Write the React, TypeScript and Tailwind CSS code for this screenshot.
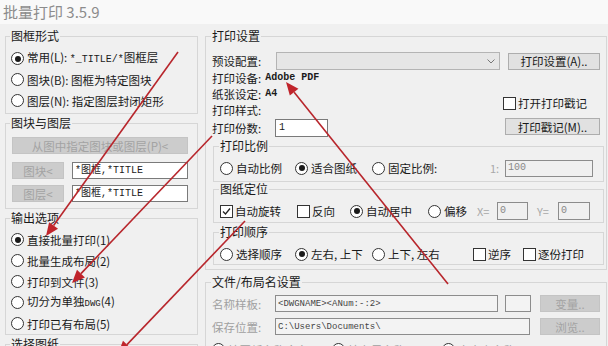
import React from 'react'

const mono = "font-['Liberation_Mono','Noto_Sans_CJK_SC',monospace]"

function Radio({ label, checked = false, className = '' }: { label: React.ReactNode; checked?: boolean; className?: string }) {
  return (
    <div className={`flex items-center gap-[3px] shrink-0 ${className}`}>
      <span className="w-[13px] h-[13px] rounded-full border border-[#333] bg-white flex items-center justify-center shrink-0">
        {checked && <span className="w-[6px] h-[6px] rounded-full bg-[#1a1a1a]" />}
      </span>
      <span className="whitespace-nowrap">{label}</span>
    </div>
  )
}

function Check({ label, checked = false, className = '' }: { label: string; checked?: boolean; className?: string }) {
  return (
    <div className={`flex items-center gap-[2px] shrink-0 ${className}`}>
      <span className="w-[13px] h-[13px] border border-[#333] bg-white flex items-center justify-center shrink-0">
        {checked && (
          <svg width="9" height="9" viewBox="0 0 9 9">
            <path d="M1 4.5 L3.5 7 L8 1.5" stroke="#222" strokeWidth="1.3" fill="none" />
          </svg>
        )}
      </span>
      <span className="whitespace-nowrap">{label}</span>
    </div>
  )
}

function Btn({ label, disabled = false, className = '' }: { label: string; disabled?: boolean; className?: string }) {
  return (
    <div
      className={`flex items-center justify-center whitespace-nowrap border ${
        disabled ? 'bg-[#cccccc] border-[#c4c4c4] text-[#a3a3a3]' : 'bg-[#e1e1e1] border-[#adadad] text-[#1a1a1a]'
      } ${className}`}
    >
      {label}
    </div>
  )
}

function Group({ title, className = '', children }: { title: string; className?: string; children?: React.ReactNode }) {
  return (
    <fieldset className={`border border-[#d6d6d6] min-w-0 ${className}`}>
      <legend className="px-[1px] -ml-[1px] text-[12px] leading-[14px] h-[14px] whitespace-nowrap">{title}</legend>
      {children}
    </fieldset>
  )
}

function Arrow({ x1, y1, x2, y2 }: { x1: number; y1: number; x2: number; y2: number }) {
  const dx = x2 - x1
  const dy = y2 - y1
  const len = Math.hypot(dx, dy)
  const ux = dx / len
  const uy = dy / len
  const hl = 13
  const hw = 5.5
  const bx = x2 - ux * hl
  const by = y2 - uy * hl
  const pts = `${x2},${y2} ${bx - uy * hw},${by + ux * hw} ${bx + uy * hw},${by - ux * hw}`
  return (
    <g>
      <line x1={x1} y1={y1} x2={bx} y2={by} stroke="#b8262c" strokeWidth="1.6" />
      <polygon points={pts} fill="#c0242b" />
    </g>
  )
}

export default function App() {
  return (
    <div className="relative w-[608px] h-[346px] overflow-hidden bg-[#f0f0f0] text-[11.5px] leading-[14px] text-[#1a1a1a] font-['Noto_Sans_CJK_SC',sans-serif]">
      <div className="h-[24px] bg-[#f9f9f9] flex items-center pl-[3px] text-[15px] text-[#8c8c8c]">批量打印 3.5.9</div>

      <div className="flex">
        {/* left column */}
        <div className="w-[200px] shrink-0 flex flex-col">
          <Group title="图框形式" className="mt-[5px] ml-[5px] w-[193px] pl-[5px] pr-[4px] pt-[5px] pb-[2px]">
            <Radio className="h-[21px]" checked label={<>常用(L): <span className={`${mono} text-[10px]`}>*_TITLE/*</span>图框层</>} />
            <Radio className="h-[21px]" label="图块(B): 图框为特定图块" />
            <Radio className="h-[21px]" label="图层(N): 指定图层封闭矩形" />
          </Group>

          <Group title="图块与图层" className="mt-[2px] ml-[5px] w-[193px] pl-[5px] pr-[4px] pt-[7px] pb-[6px]">
            <Btn disabled label="从图中指定图块或图层(P)<" className="h-[17px] ml-[1px] w-[176px]" />
            <div className="flex mt-[8px] h-[17px] ml-[1px]">
              <Btn disabled label="图块<" className="w-[52px]" />
              <div className={`ml-[8px] w-[116px] bg-white border border-[#7a7a7a] flex items-center pl-[2px] text-[10px] ${mono}`}>*图框,*TITLE</div>
            </div>
            <div className="flex mt-[6px] h-[17px] ml-[1px]">
              <Btn disabled label="图层<" className="w-[52px]" />
              <div className={`ml-[8px] w-[116px] bg-white border border-[#7a7a7a] flex items-center pl-[2px] text-[10px] ${mono}`}>*图框,*TITLE</div>
            </div>
          </Group>

          <Group title="输出选项" className="mt-[2px] ml-[5px] w-[193px] pl-[5px] pr-[4px] pt-[4px]">
            <Radio className="h-[21px]" checked label="直接批量打印(1)" />
            <Radio className="h-[21px]" label="批量生成布局(2)" />
            <Radio className="h-[21px]" label="打印到文件(3)" />
            <Radio className="h-[21px]" label={<>切分为单独<span className={`${mono} text-[9px]`}>DWG</span>(4)</>} />
            <Radio className="h-[21px]" label="打印已有布局(5)" />
          </Group>

          <Group title="选择图纸" className="mt-[2px] ml-[5px] w-[193px] pl-[5px] h-[40px]" />
        </div>

        {/* right column */}
        <div className="flex-1 flex flex-col">
          <Group title="打印设置" className="mt-[5px] ml-[5px] w-[402px] pl-[6px] pr-[6px] pb-[4px]">
            <div className="flex items-center mt-[9px] h-[18px]">
              <span className="w-[64px]">预设配置:</span>
              <div className="w-[224px] h-[18px] bg-[#e6e6e6] border border-[#b4b4b4] flex items-center justify-end pr-[4px]">
                <svg width="8" height="5" viewBox="0 0 8 5">
                  <path d="M0.5 0.5 L4 4 L7.5 0.5" stroke="#777" strokeWidth="1" fill="none" />
                </svg>
              </div>
              <Btn label="打印设置(A).." className="ml-[8px] w-[92px] h-[17px]" />
            </div>

            <div className="flex">
              <div className="flex flex-col">
                <div className="h-[16px] flex items-center">
                  打印设备: <span className={`${mono} text-[10px] font-bold ml-[4px]`}>Adobe PDF</span>
                </div>
                <div className="h-[16px] flex items-center">
                  纸张设定: <span className={`${mono} text-[10px] font-bold ml-[4px]`}>A4</span>
                </div>
                <div className="h-[16px] flex items-center">打印样式:</div>
                <div className="h-[18px] mt-[1px] flex items-center">
                  <span className="w-[63px]">打印份数:</span>
                  <div className={`w-[53px] h-[18px] bg-white border border-[#7a7a7a] flex items-center pl-[3px] text-[10px] ${mono}`}>1</div>
                </div>
              </div>
              <div className="ml-auto w-[97px] flex flex-col pt-[25px]">
                <Check className="h-[16px]" label="打开打印戳记" />
                <Btn label="打印戳记(M).." className="mt-[7px] ml-[2px] w-[95px] h-[17px]" />
              </div>
            </div>

            <Group title="打印比例" className="mt-[2px] ml-[1px] w-[391px] pl-[6px] pb-[4px]">
              <div className="flex items-center mt-[6px] h-[18px]">
                <Radio className="w-[75px]" label="自动比例" />
                <Radio className="w-[77px]" checked label="适合图纸" />
                <Radio className="w-[118px]" label="固定比例:" />
                <span className="w-[15px] text-[#a8a8a8] text-[11px]">1:</span>
                <div className={`w-[88px] h-[17px] bg-[#f0f0f0] border border-[#8c8c8c] flex items-center pl-[2px] text-[10px] text-[#888] ${mono}`}>100</div>
              </div>
            </Group>

            <Group title="图纸定位" className="ml-[1px] w-[391px] pl-[6px] pb-[2px]">
              <div className="flex items-center mt-[6px] h-[18px]">
                <Check className="w-[77px]" checked label="自动旋转" />
                <Check className="w-[53px]" label="反向" />
                <Radio className="w-[78px]" checked label="自动居中" />
                <Radio className="w-[49px]" label="偏移" />
                <span className="w-[20px] text-[#a8a8a8] text-[11px]">X=</span>
                <div className={`w-[31px] h-[18px] bg-[#f0f0f0] border border-[#8c8c8c] flex items-center pl-[2px] text-[10px] text-[#888] ${mono}`}>0</div>
                <span className="ml-[9px] w-[21px] text-[#a8a8a8] text-[11px]">Y=</span>
                <div className={`w-[32px] h-[18px] bg-[#f0f0f0] border border-[#8c8c8c] flex items-center pl-[2px] text-[10px] text-[#888] ${mono}`}>0</div>
              </div>
            </Group>

            <Group title="打印顺序" className="mt-[2px] ml-[1px] w-[391px] pl-[6px] pb-[1px]">
              <div className="flex items-center mt-[6px] h-[18px]">
                <Radio className="w-[75px]" label="选择顺序" />
                <Radio className="w-[77px]" checked label="左右, 上下" />
                <Radio className="w-[101px]" label="上下, 左右" />
                <Check className="w-[50px]" label="逆序" />
                <Check label="逐份打印" />
              </div>
            </Group>
          </Group>

          <Group title="文件/布局名设置" className="mt-[5px] ml-[5px] w-[402px] pl-[6px] pr-[6px] pb-[4px]">
            <div className="flex items-center mt-[6px] h-[17px]">
              <span className="w-[63px] text-[#a0a0a0]">名称样板:</span>
              <div className={`w-[223px] h-[17px] bg-[#f3f3f3] border border-[#8c8c8c] flex items-center pl-[2px] text-[9px] text-[#444] ${mono}`}>&lt;DWGNAME&gt;&lt;ANum:-:2&gt;</div>
              <div className="ml-[7px] w-[26px] h-[17px] bg-[#f3f3f3] border border-[#8c8c8c]" />
              <Btn disabled label="变量.." className="ml-[9px] w-[60px] h-[17px]" />
            </div>
            <div className="flex items-center mt-[6px] h-[17px]">
              <span className="w-[63px] text-[#a0a0a0]">保存位置:</span>
              <div className={`w-[255px] h-[17px] bg-[#f3f3f3] border border-[#8c8c8c] flex items-center pl-[2px] text-[9px] text-[#444] ${mono}`}>C:\Users\Documents\</div>
              <Btn disabled label="浏览.." className="ml-[10px] w-[60px] h-[17px]" />
            </div>
            <div className="flex items-center mt-[6px] h-[17px] text-[#a0a0a0]">
              <Radio className="w-[120px]" label="按图纸名称命名" />
              <Radio className="w-[110px]" label="按布局名称" />
              <Radio label="自定义名称" />
            </div>
          </Group>
        </div>
      </div>

      <svg className="absolute inset-0 pointer-events-none" width="608" height="346" viewBox="0 0 608 346">
        <Arrow x1={178} y1={52} x2={46} y2={236} />
        <Arrow x1={212} y1={136} x2={72} y2={283} />
        <Arrow x1={448} y1={284} x2={286} y2={82} />
        <Arrow x1={245} y1={221} x2={118} y2={354} />
      </svg>
    </div>
  )
}
